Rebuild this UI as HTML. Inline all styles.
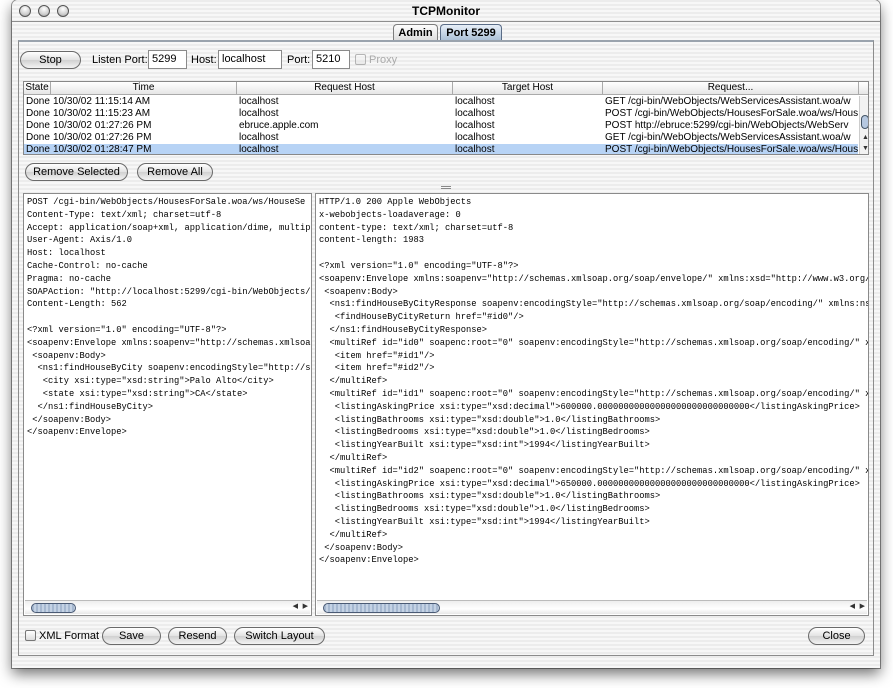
<!DOCTYPE html>
<html><head><meta charset="utf-8"><style>
*{box-sizing:border-box;margin:0;padding:0}
body{width:893px;height:688px;background:#fff;position:relative;overflow:hidden;font-family:"Liberation Sans",sans-serif;font-size:11px;color:#000}
.win{position:absolute;left:12px;top:0;width:868px;height:668px;border-radius:6px 6px 0 0;background:repeating-linear-gradient(#ececec 0,#ececec 2px,#f7f7f7 2px,#f7f7f7 4px);box-shadow:0 6px 14px rgba(0,0,0,.55),0 0 0 1px #9a9a9a}
.a{position:absolute}
.title{left:0;top:0;width:868px;height:22px;border-bottom:1px solid #8e8e8e;text-align:center;line-height:22px;font-size:12px;font-weight:bold}
.light{width:12px;height:12px;border-radius:50%;border:1px solid #555;background:radial-gradient(circle at 50% 30%,#fff,#cfcfcf 60%,#999);top:5px}
.box{left:6px;top:40px;width:856px;height:616px;border:1px solid #8c8c8c;border-top:2px solid #9aa3ad}
.tab{top:24px;height:17px;border:1px solid #7d7d7d;border-bottom:none;border-radius:4px 4px 0 0;background:linear-gradient(#fdfdfd,#dcdcdc);text-align:center;line-height:16px;font-weight:bold;font-size:11px}
.tab.sel{background:linear-gradient(#e7eef7,#a9bed6);border-color:#5a6c86}
.btn{height:18px;border:1px solid #6a6a6a;border-radius:9px;background:linear-gradient(#fff,#e2e2e2 50%,#d0d0d0 51%,#f3f3f3);text-align:center;line-height:16px;font-size:11px}
.inp{height:19px;border:1px solid #8a8a8a;background:#fff;padding-left:3px;line-height:17px;font-size:11px}
.tbl{left:11px;top:81px;width:846px;height:74px;border:1px solid #888;background:#fff;overflow:hidden}
.hd{position:absolute;top:0;height:13px;border-right:1px solid #aaa;border-bottom:1px solid #aaa;background:linear-gradient(#fff,#e6e6e6);text-align:center;line-height:12px;font-size:10px}
.row{position:absolute;left:0;width:834px;height:12px;line-height:12px;font-size:10px}
.row span{position:absolute;white-space:nowrap}
.sel{background:#b7d3f5}
.pane{top:193px;height:423px;border:1px solid #8a8a8a;background:#fff;overflow:hidden}
pre{font-family:"Liberation Mono",monospace;font-size:8.75px;line-height:12.8px;padding:2px 0 0 3px;white-space:pre}
.sb{position:absolute;bottom:1px;left:1px;right:1px;height:14px;background:linear-gradient(#eee,#fff 60%,#e8e8e8);border-top:1px solid #bbb}
.thumb{position:absolute;top:2px;height:10px;border-radius:5px;border:1px solid #4a5a74;background:repeating-linear-gradient(90deg,#a6b8d0 0,#a6b8d0 2px,#c4d2e4 2px,#c4d2e4 4px)}
.arr{position:absolute;top:1px;font-size:7px;color:#333}
.cb{width:11px;height:11px;border:1px solid #777;border-radius:2px;background:linear-gradient(#fff,#ddd)}
</style></head><body>
<div class="win">
 <div class="a title">TCPMonitor</div>
 <div class="a light" style="left:7px"></div><div class="a light" style="left:26px"></div><div class="a light" style="left:45px"></div>
 <div class="a tab" style="left:381px;width:45px">Admin</div>
 <div class="a tab sel" style="left:428px;width:62px">Port 5299</div>
 <div class="a box"></div>
 <div class="a btn" style="left:8px;top:51px;width:61px">Stop</div>
 <div class="a" style="left:80px;top:54px">Listen Port:</div>
 <div class="a inp" style="left:136px;top:50px;width:39px">5299</div>
 <div class="a" style="left:179px;top:54px">Host:</div>
 <div class="a inp" style="left:206px;top:50px;width:64px">localhost</div>
 <div class="a" style="left:275px;top:54px">Port:</div>
 <div class="a inp" style="left:300px;top:50px;width:38px">5210</div>
 <div class="a cb" style="left:343px;top:54px;opacity:.5"></div>
 <div class="a" style="left:357px;top:54px;color:#aaa">Proxy</div>
 <div class="a tbl">
  <div class="hd" style="left:0;width:27px">State</div>
  <div class="hd" style="left:27px;width:186px">Time</div>
  <div class="hd" style="left:213px;width:216px">Request Host</div>
  <div class="hd" style="left:429px;width:150px">Target Host</div>
  <div class="hd" style="left:579px;width:256px">Request...</div>
  <div class="hd" style="left:835px;width:11px"></div>
  <div class="row" style="top:14px"><span style="left:2px">Done</span><span style="left:29px">10/30/02 11:15:14 AM</span><span style="left:215px">localhost</span><span style="left:431px">localhost</span><span style="left:581px">GET /cgi-bin/WebObjects/WebServicesAssistant.woa/w</span></div>
  <div class="row" style="top:26px"><span style="left:2px">Done</span><span style="left:29px">10/30/02 11:15:23 AM</span><span style="left:215px">localhost</span><span style="left:431px">localhost</span><span style="left:581px">POST /cgi-bin/WebObjects/HousesForSale.woa/ws/Hous</span></div>
  <div class="row" style="top:38px"><span style="left:2px">Done</span><span style="left:29px">10/30/02 01:27:26 PM</span><span style="left:215px">ebruce.apple.com</span><span style="left:431px">localhost</span><span style="left:581px">POST http://ebruce:5299/cgi-bin/WebObjects/WebServ</span></div>
  <div class="row" style="top:50px"><span style="left:2px">Done</span><span style="left:29px">10/30/02 01:27:26 PM</span><span style="left:215px">localhost</span><span style="left:431px">localhost</span><span style="left:581px">GET /cgi-bin/WebObjects/WebServicesAssistant.woa/w</span></div>
  <div class="row sel" style="top:62px"><span style="left:2px">Done</span><span style="left:29px">10/30/02 01:28:47 PM</span><span style="left:215px">localhost</span><span style="left:431px">localhost</span><span style="left:581px">POST /cgi-bin/WebObjects/HousesForSale.woa/ws/Hous</span></div>
  <div class="a" style="left:835px;top:14px;width:11px;height:60px;background:#f2f2f2;border-left:1px solid #ccc"><div class="a" style="left:1px;top:19px;width:8px;height:14px;border:1px solid #456;border-radius:4px;background:#b6c8e0"></div><div class="arr" style="left:2px;top:38px">▲</div><div class="arr" style="left:2px;top:49px">▼</div></div>
 </div>
 <div class="a btn" style="left:13px;top:163px;width:103px">Remove Selected</div>
 <div class="a btn" style="left:125px;top:163px;width:76px">Remove All</div>
 <div class="a" style="left:429px;top:186px;width:10px;height:3px;border-top:1px solid #888;border-bottom:1px solid #888"></div>
 <div class="a pane" style="left:11px;width:289px"><pre>POST /cgi-bin/WebObjects/HousesForSale.woa/ws/HouseSe
Content-Type: text/xml; charset=utf-8
Accept: application/soap+xml, application/dime, multip
User-Agent: Axis/1.0
Host: localhost
Cache-Control: no-cache
Pragma: no-cache
SOAPAction: "http://localhost:5299/cgi-bin/WebObjects/
Content-Length: 562

&lt;?xml version="1.0" encoding="UTF-8"?&gt;
&lt;soapenv:Envelope xmlns:soapenv="http://schemas.xmlsoa
 &lt;soapenv:Body&gt;
  &lt;ns1:findHouseByCity soapenv:encodingStyle="http://s
   &lt;city xsi:type="xsd:string"&gt;Palo Alto&lt;/city&gt;
   &lt;state xsi:type="xsd:string"&gt;CA&lt;/state&gt;
  &lt;/ns1:findHouseByCity&gt;
 &lt;/soapenv:Body&gt;
&lt;/soapenv:Envelope&gt;</pre>
  <div class="sb"><div class="thumb" style="left:6px;width:45px"></div><div class="arr" style="right:12px">◀</div><div class="arr" style="right:2px">▶</div></div></div>
 <div class="a pane" style="left:303px;width:554px"><pre>HTTP/1.0 200 Apple WebObjects
x-webobjects-loadaverage: 0
content-type: text/xml; charset=utf-8
content-length: 1983

&lt;?xml version="1.0" encoding="UTF-8"?&gt;
&lt;soapenv:Envelope xmlns:soapenv="http://schemas.xmlsoap.org/soap/envelope/" xmlns:xsd="http://www.w3.org/
 &lt;soapenv:Body&gt;
  &lt;ns1:findHouseByCityResponse soapenv:encodingStyle="http://schemas.xmlsoap.org/soap/encoding/" xmlns:ns
   &lt;findHouseByCityReturn href="#id0"/&gt;
  &lt;/ns1:findHouseByCityResponse&gt;
  &lt;multiRef id="id0" soapenc:root="0" soapenv:encodingStyle="http://schemas.xmlsoap.org/soap/encoding/" x
   &lt;item href="#id1"/&gt;
   &lt;item href="#id2"/&gt;
  &lt;/multiRef&gt;
  &lt;multiRef id="id1" soapenc:root="0" soapenv:encodingStyle="http://schemas.xmlsoap.org/soap/encoding/" x
   &lt;listingAskingPrice xsi:type="xsd:decimal"&gt;600000.00000000000000000000000000000&lt;/listingAskingPrice&gt;
   &lt;listingBathrooms xsi:type="xsd:double"&gt;1.0&lt;/listingBathrooms&gt;
   &lt;listingBedrooms xsi:type="xsd:double"&gt;1.0&lt;/listingBedrooms&gt;
   &lt;listingYearBuilt xsi:type="xsd:int"&gt;1994&lt;/listingYearBuilt&gt;
  &lt;/multiRef&gt;
  &lt;multiRef id="id2" soapenc:root="0" soapenv:encodingStyle="http://schemas.xmlsoap.org/soap/encoding/" x
   &lt;listingAskingPrice xsi:type="xsd:decimal"&gt;650000.00000000000000000000000000000&lt;/listingAskingPrice&gt;
   &lt;listingBathrooms xsi:type="xsd:double"&gt;1.0&lt;/listingBathrooms&gt;
   &lt;listingBedrooms xsi:type="xsd:double"&gt;1.0&lt;/listingBedrooms&gt;
   &lt;listingYearBuilt xsi:type="xsd:int"&gt;1994&lt;/listingYearBuilt&gt;
  &lt;/multiRef&gt;
 &lt;/soapenv:Body&gt;
&lt;/soapenv:Envelope&gt;</pre>
  <div class="sb"><div class="thumb" style="left:6px;width:117px"></div><div class="arr" style="right:12px">◀</div><div class="arr" style="right:2px">▶</div></div></div>
 <div class="a cb" style="left:13px;top:630px"></div>
 <div class="a" style="left:27px;top:630px">XML Format</div>
 <div class="a btn" style="left:90px;top:627px;width:59px">Save</div>
 <div class="a btn" style="left:156px;top:627px;width:59px">Resend</div>
 <div class="a btn" style="left:222px;top:627px;width:91px">Switch Layout</div>
 <div class="a btn" style="left:796px;top:627px;width:57px">Close</div>
</div>
</body></html>
